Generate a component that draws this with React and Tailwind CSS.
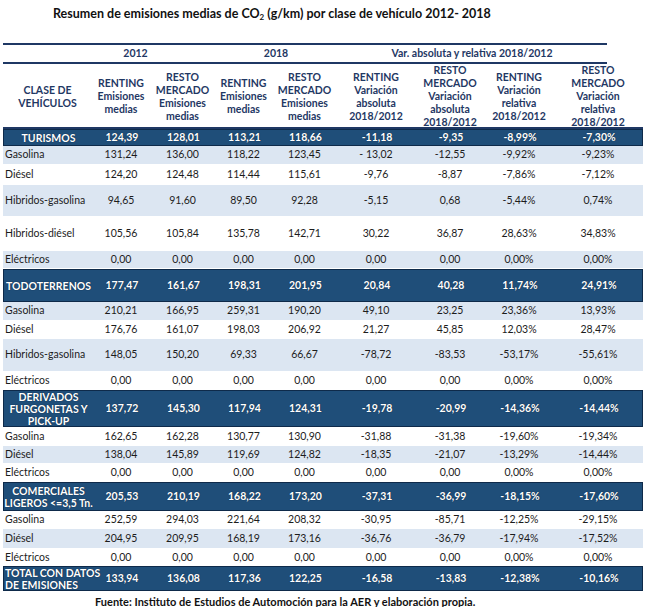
import React from "react";

const rows = [
  { t: "d", h: 17, l: "TURISMOS", v: ["124,39", "128,01", "113,21", "118,66", "-11,18", "-9,35", "-8,99%", "-7,30%"] },
  { t: "l", h: 19, l: "Gasolina", v: ["131,24", "136,00", "118,22", "123,45", "- 13,02", "-12,55", "-9,92%", "-9,23%"] },
  { t: "w", h: 20, l: "Diésel", v: ["124,20", "124,48", "114,44", "115,61", "-9,76", "-8,87", "-7,86%", "-7,12%"] },
  { t: "l", h: 32, l: "Hibridos-gasolina", v: ["94,65", "91,60", "89,50", "92,28", "-5,15", "0,68", "-5,44%", "0,74%"] },
  { t: "w", h: 34, l: "Hibridos-diésel", v: ["105,56", "105,84", "135,78", "142,71", "30,22", "36,87", "28,63%", "34,83%"] },
  { t: "l", h: 18, l: "Eléctricos", v: ["0,00", "0,00", "0,00", "0,00", "0,00", "0,00", "0,00%", "0,00%"] },
  { t: "d", h: 33, l: "TODOTERRENOS", v: ["177,47", "161,67", "198,31", "201,95", "20,84", "40,28", "11,74%", "24,91%"] },
  { t: "l", h: 19, l: "Gasolina", v: ["210,21", "166,95", "259,31", "190,20", "49,10", "23,25", "23,36%", "13,93%"] },
  { t: "w", h: 18, l: "Diésel", v: ["176,76", "161,07", "198,03", "206,92", "21,27", "45,85", "12,03%", "28,47%"] },
  { t: "l", h: 33, l: "Hibridos-gasolina", v: ["148,05", "150,20", "69,33", "66,67", "-78,72", "-83,53", "-53,17%", "-55,61%"] },
  { t: "w", h: 18, l: "Eléctricos", v: ["0,00", "0,00", "0,00", "0,00", "0,00", "0,00", "0,00%", "0,00%"] },
  { t: "d", h: 37, l: ["DERIVADOS", "FURGONETAS Y", "PICK-UP"], v: ["137,72", "145,30", "117,94", "124,31", "-19,78", "-20,99", "-14,36%", "-14,44%"] },
  { t: "w", h: 19, l: "Gasolina", v: ["162,65", "162,28", "130,77", "130,90", "-31,88", "-31,38", "-19,60%", "-19,34%"] },
  { t: "l", h: 18, l: "Diésel", v: ["138,04", "145,89", "119,69", "124,82", "-18,35", "-21,07", "-13,29%", "-14,44%"] },
  { t: "w", h: 18, l: "Eléctricos", v: ["0,00", "0,00", "0,00", "0,00", "0,00", "0,00", "0,00%", "0,00%"] },
  { t: "d", h: 29, l: ["COMERCIALES", "LIGEROS <=3,5 Tn."], v: ["205,53", "210,19", "168,22", "173,20", "-37,31", "-36,99", "-18,15%", "-17,60%"] },
  { t: "w", h: 18, l: "Gasolina", v: ["252,59", "294,03", "221,64", "208,32", "-30,95", "-85,71", "-12,25%", "-29,15%"] },
  { t: "l", h: 20, l: "Diésel", v: ["204,95", "209,95", "168,19", "173,16", "-36,76", "-36,79", "-17,94%", "-17,52%"] },
  { t: "w", h: 17, l: "Eléctricos", v: ["0,00", "0,00", "0,00", "0,00", "0,00", "0,00", "0,00%", "0,00%"] },
  { t: "d", h: 25, l: ["TOTAL CON DATOS", "DE EMISIONES"], left: true, v: ["133,94", "136,08", "117,36", "122,25", "-16,58", "-13,83", "-12,38%", "-10,16%"] },
];

const GRID = "grid grid-cols-[89px_58px_65px_57px_65px_78px_70px_68px_90px]";

function Row({ r }) {
  const bg =
    r.t === "d"
      ? "bg-[#1f4e79] text-white font-bold border border-[#0e2a4a] [text-shadow:0_0_1px_#0a1c33]"
      : r.t === "l"
      ? "bg-[#dce6f2] text-[#1c1c1c] border-b border-white"
      : "bg-white text-[#1c1c1c]";
  const label = Array.isArray(r.l) ? r.l : [r.l];
  return (
    <div className={`${GRID} ${bg} items-center`} style={{ height: r.h }}>
      <div
        className={
          r.t === "d"
            ? `flex flex-col leading-[12px] ${r.left ? "items-start pl-[1px]" : "items-center"}`
            : "pl-[2px]"
        }
      >
        {label.map((s, i) => (
          <span key={i} className="whitespace-nowrap">
            {s}
          </span>
        ))}
      </div>
      {r.v.map((x, i) => (
        <div key={i} className="text-center whitespace-nowrap">
          {x}
        </div>
      ))}
    </div>
  );
}

function H({ lines }) {
  return (
    <div className="flex flex-col items-center justify-center leading-[13px] text-center">
      {lines.map((s, i) => (
        <span key={i} className="whitespace-nowrap">
          {s}
        </span>
      ))}
    </div>
  );
}

export default function App() {
  return (
    <div className="w-[650px] h-[607px] bg-white overflow-hidden font-['Lato',sans-serif] text-[10.5px]">
      <div className="pl-[53px] pt-[5px] h-[43px] text-[12.5px] font-bold text-[#111] whitespace-nowrap">
        Resumen de emisiones medias de CO<sub className="text-[8px] align-baseline relative top-[2px]">2</sub> (g/km) por clase de vehículo 2012- 2018
      </div>
      <div className="ml-[3px] w-[640px]">
        <div className="w-[604px] border-t-2 border-[#1f3864]" />
        <div className={`${GRID} h-[19px] items-center font-bold text-[#1f3864] border-b-2 border-[#1f3864] w-[604px]`}>
          <div />
          <div className="col-span-2 text-center pr-[36px]">2012</div>
          <div className="col-span-2 text-center">2018</div>
          <div className="col-span-4 text-center pr-[36px]">Var. absoluta y relativa 2018/2012</div>
        </div>
        <div className={`${GRID} h-[65px] font-bold text-[#1f3864] border-b-2 border-[#1f3864]`}>
          <H lines={["CLASE DE", "VEHÍCULOS"]} />
          <H lines={["RENTING", "Emisiones", "medias"]} />
          <H lines={["RESTO", "MERCADO", "Emisiones", "medias"]} />
          <H lines={["RENTING", "Emisiones", "medias"]} />
          <H lines={["RESTO", "MERCADO", "Emisiones", "medias"]} />
          <H lines={["RENTING", "Variación", "absoluta", "2018/2012"]} />
          <H lines={["RESTO", "MERCADO", "Variación", "absoluta", "2018/2012"]} />
          <H lines={["RENTING", "Variación", "relativa", "2018/2012"]} />
          <H lines={["RESTO", "MERCADO", "Variación", "relativa", "2018/2012"]} />
        </div>
        {rows.map((r, i) => (
          <Row key={i} r={r} />
        ))}
      </div>
      <div className="pl-[95px] pt-[3px] text-[11px] font-bold text-[#111] whitespace-nowrap">
        Fuente: Instituto de Estudios de Automoción para la AER y elaboración propia.
      </div>
    </div>
  );
}
